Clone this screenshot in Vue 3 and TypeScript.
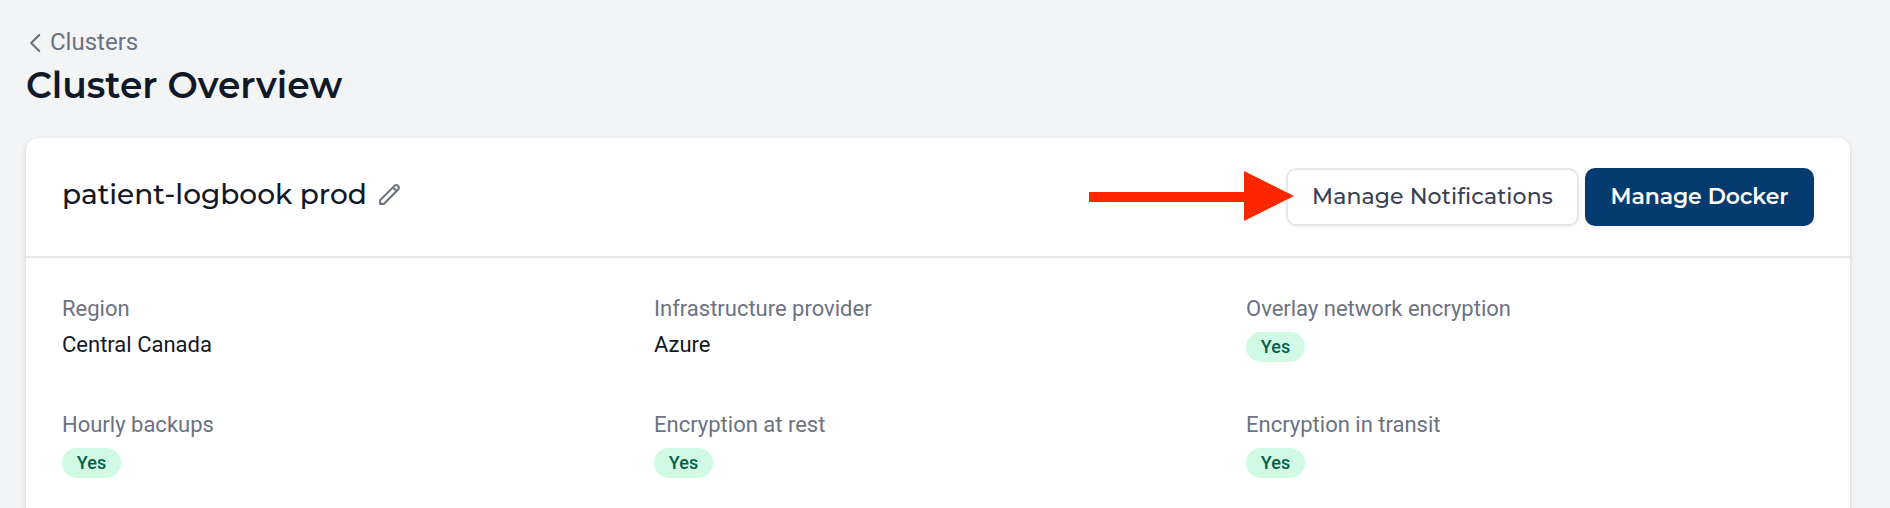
<script setup lang="ts">
interface Detail {
  label: string
  value: string
  badge: boolean
}

const details: Detail[] = [
  { label: 'Region', value: 'Central Canada', badge: false },
  { label: 'Infrastructure provider', value: 'Azure', badge: false },
  { label: 'Overlay network encryption', value: 'Yes', badge: true },
  { label: 'Hourly backups', value: 'Yes', badge: true },
  { label: 'Encryption at rest', value: 'Yes', badge: true },
  { label: 'Encryption in transit', value: 'Yes', badge: true },
]
</script>

<template>
  <main class="page">
    <a class="back">
      <svg class="chevron" viewBox="0 0 12 20" fill="none">
        <path d="M10.2 2L2.2 10l8 8" stroke="currentColor" stroke-width="2.2" stroke-linecap="round" stroke-linejoin="round" />
      </svg>
      <span>Clusters</span>
    </a>
    <h1 class="title">Cluster Overview</h1>

    <section class="card">
      <header class="card-header">
        <h2 class="name">patient-logbook prod</h2>
        <svg class="pencil" viewBox="0 0 24 24" fill="none">
          <path d="M15.232 5.232l3.536 3.536m-2.036-5.036a2.5 2.5 0 113.536 3.536L6.5 21.036H3v-3.572L16.732 3.732z" stroke="currentColor" stroke-width="2" stroke-linecap="round" stroke-linejoin="round" />
        </svg>
        <div class="actions">
          <button class="btn secondary"><span>Manage Notifications</span></button>
          <button class="btn primary"><span>Manage Docker</span></button>
          <svg class="arrow" viewBox="0 0 205 50">
            <path d="M0 21h155V0l50 25-50 25V31H0z" fill="#ff2600" />
          </svg>
        </div>
      </header>
      <dl class="details">
        <div v-for="item in details" :key="item.label" class="detail">
          <dt>{{ item.label }}</dt>
          <dd><span :class="{ badge: item.badge }">{{ item.value }}</span></dd>
        </div>
      </dl>
    </section>
  </main>
</template>

<style>
body {
  background: #f3f4f6;
}
</style>

<style scoped>
.page {
  box-sizing: border-box;
  height: 508px;
  padding: 26px 40px 0 26px;
  overflow: hidden;
  background: #f3f4f6;
  font-family: Roboto, sans-serif;
}
.back {
  display: flex;
  align-items: center;
  height: 32px;
  padding-left: 3px;
  color: #6b7280;
  font-size: 24px;
  line-height: 32px;
}
.chevron {
  width: 12px;
  height: 20px;
  margin: 2px 9px 0 0;
}
.title {
  height: 48px;
  margin: 3px 0 29px;
  color: #111827;
  font: 600 36px/48px Montserrat, Inter, sans-serif;
  white-space: nowrap;
}
.card {
  height: 440px;
  border-radius: 12px;
  background: #fff;
  box-shadow: 0 2px 6px rgba(0, 0, 0, 0.1), 0 2px 4px rgba(0, 0, 0, 0.06);
}
.card-header {
  box-sizing: border-box;
  display: flex;
  align-items: center;
  height: 120px;
  padding: 0 36px;
  border-bottom: 2px solid #e5e7eb;
}
.name {
  width: 303px;
  margin: 0 0 6px;
  color: #111827;
  font: 500 28px/40px Montserrat, Inter, sans-serif;
  white-space: nowrap;
}
.pencil {
  width: 25px;
  height: 25px;
  margin: 0 0 6px 12px;
  color: #6b7280;
}
.actions {
  position: relative;
  display: flex;
  gap: 6px;
  margin-left: auto;
}
.btn {
  box-sizing: border-box;
  height: 58px;
  padding: 0;
  border: 2px solid transparent;
  border-radius: 10px;
  font: 500 22px/32px Montserrat, Inter, sans-serif;
  letter-spacing: 0.1px;
  white-space: nowrap;
}
.secondary {
  width: 293px;
  border-color: #e5e7eb;
  background: #fff;
  color: #374151;
  box-shadow: 0 2px 4px rgba(0, 0, 0, 0.05);
}
.primary {
  width: 229px;
  background: #053b6f;
  color: #fff;
  font-weight: 600;
  letter-spacing: -0.1px;
  box-shadow: 0 2px 4px rgba(0, 0, 0, 0.05);
}
.arrow {
  position: absolute;
  top: 3px;
  left: -197px;
  width: 205px;
  height: 50px;
}
.details {
  display: grid;
  grid-template-columns: repeat(3, 1fr);
  gap: 48px 24px;
  margin: 0;
  padding: 35px 36px;
}
.detail {
  height: 68px;
  font-size: 22px;
  line-height: 32px;
}
dt {
  color: #6b7280;
}
dd {
  display: flex;
  margin: 4px 0 0;
  color: #111827;
}
.badge {
  box-sizing: border-box;
  width: 59px;
  height: 30px;
  margin-top: 3px;
  border-radius: 15px;
  background: #d1fae5;
  color: #065f46;
  font-size: 18px;
  font-weight: 500;
  line-height: 30px;
  text-align: center;
}
</style>
